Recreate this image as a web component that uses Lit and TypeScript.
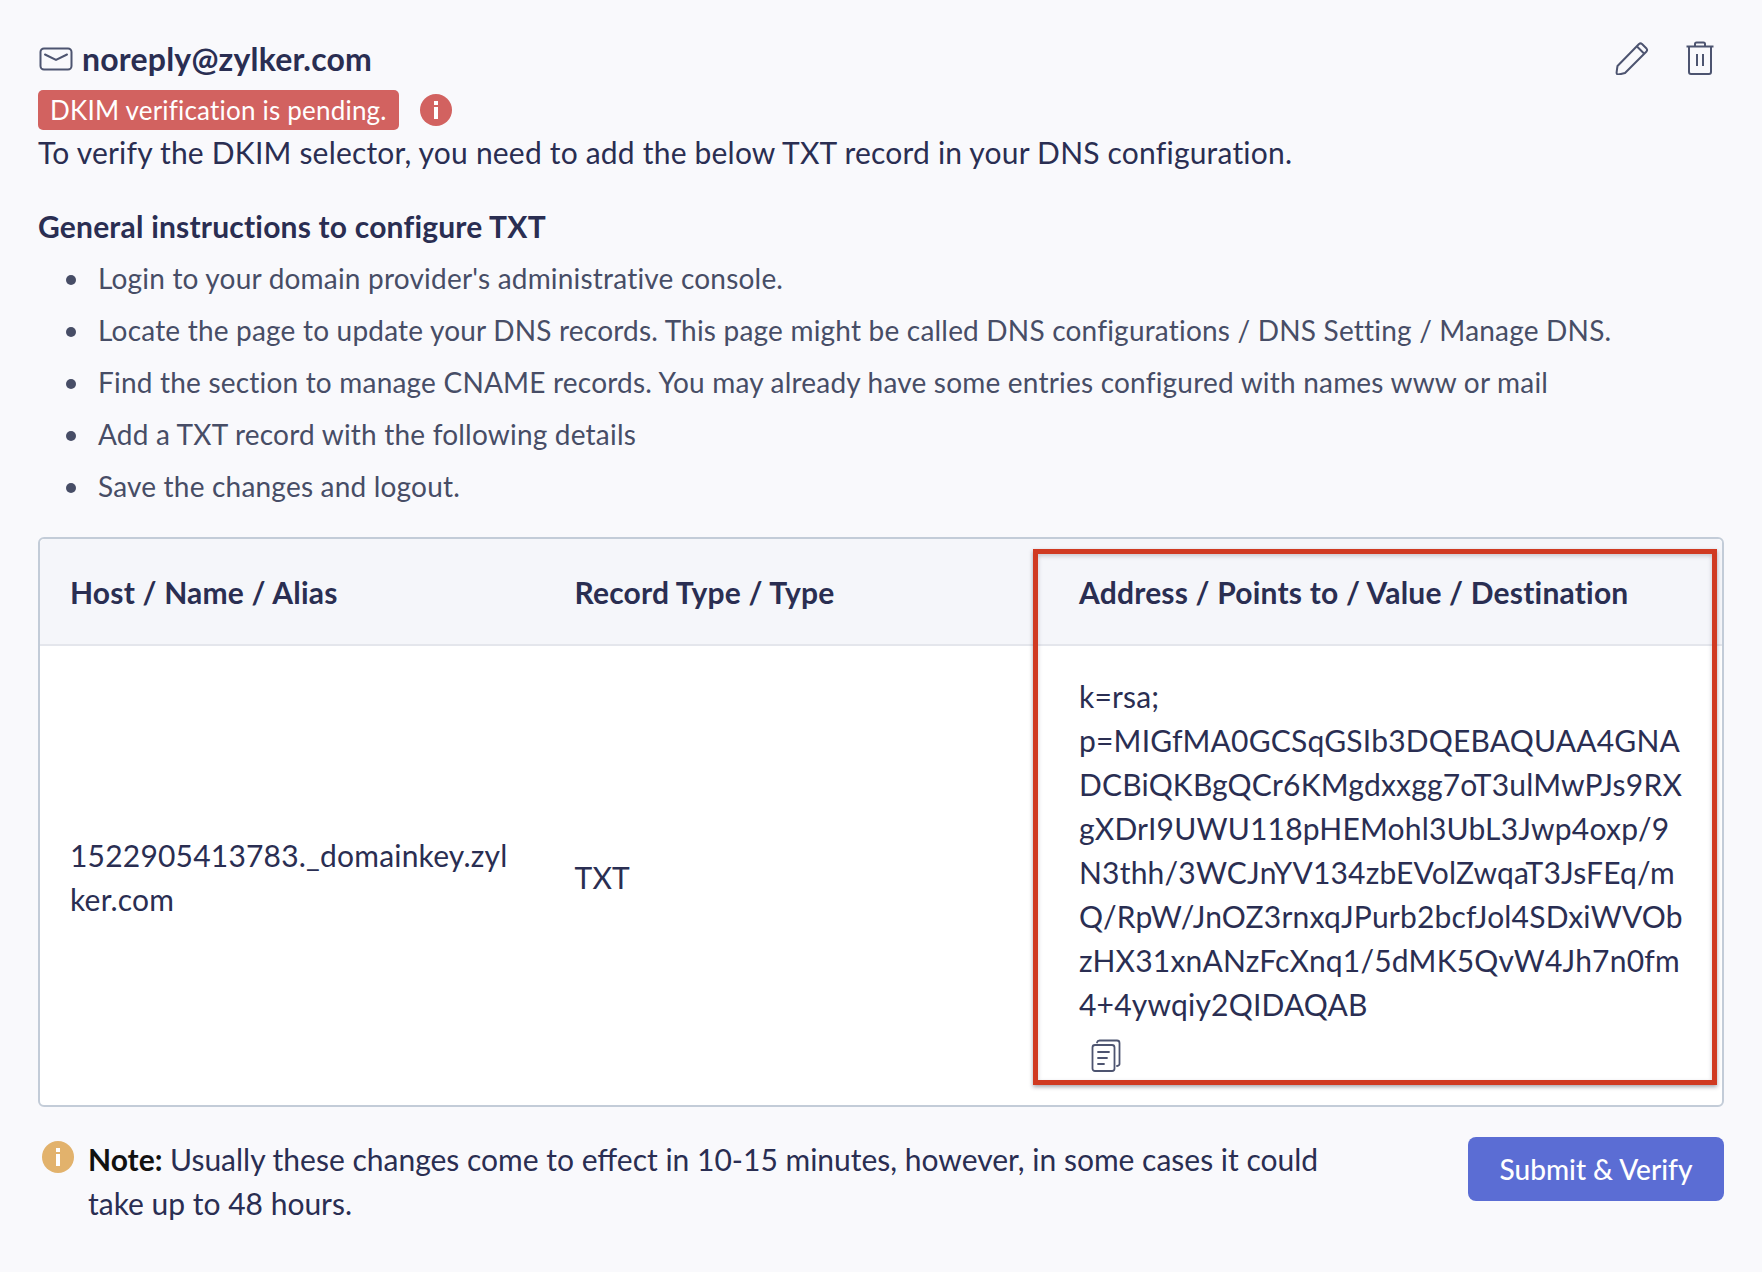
import { LitElement, html, css, svg } from "lit";
import { customElement } from "lit/decorators.js";

const items = [
  "Login to your domain provider's administrative console.",
  "Locate the page to update your DNS records. This page might be called DNS configurations / DNS Setting / Manage DNS.",
  "Find the section to manage CNAME records. You may already have some entries configured with names www or mail",
  "Add a TXT record with the following details",
  "Save the changes and logout.",
];

const stroke = "#4d5470";
const mail = svg`<svg class="mail" width="34" height="24" viewBox="0 0 34 24" fill="none" stroke="${stroke}" stroke-width="2"><rect x="1.5" y="1.5" width="31" height="21" rx="3.5"/><path d="M6 7.5 L17 13 L28 7.5" stroke-linecap="round"/></svg>`;
const pencil = svg`<svg width="34" height="34" viewBox="0 0 34 34" fill="none" stroke="${stroke}" stroke-width="2" stroke-linejoin="round"><path d="M2.5 25 L24 3 Q25.5 1.8 27 3 L31.5 7.5 Q32.7 9 31.5 10.5 L10 32 Q5 33.5 2.6 33.4 Q1.5 33 1.6 31.5 Q2 28 2.5 25Z"/><path d="M22 5.5 L29 12.5"/></svg>`;
const trash = svg`<svg width="28" height="34" viewBox="0 0 28 34" fill="none" stroke="${stroke}" stroke-width="2"><path d="M0.5 5.5 H27.5"/><path d="M9 5 V3 Q9 1.5 10.5 1.5 H17.5 Q19 1.5 19 3 V5"/><path d="M3 6 V31 Q3 33 5 33 H23 Q25 33 25 31 V6"/><path d="M11 13 V25 M17 13 V25"/></svg>`;
const copy = svg`<svg width="30" height="34" viewBox="0 0 30 34" fill="none" stroke="${stroke}" stroke-width="1.8" stroke-linecap="round"><rect x="1.5" y="6" width="22" height="26" rx="2.5"/><path d="M6 3.5 Q6.5 1.5 8.5 1.5 H26 Q28.5 1.5 28.5 4 V25 Q28.5 26.5 26 27"/><path d="M7 13 H18 M7 19 H16 M7 25 H13"/></svg>`;
const info = (c: string) => svg`<svg width="32" height="32" viewBox="0 0 32 32"><circle cx="16" cy="16" r="16" fill="${c}"/><rect x="14" y="7" width="4" height="4" fill="#fff"/><rect x="14" y="13" width="4" height="12" fill="#fff"/></svg>`;

@customElement("app-root")
export class AppRoot extends LitElement {
  static styles = css`
    :host {
      display: block;
      width: 1762px;
      height: 1272px;
      box-sizing: border-box;
      padding: 36px 38px 0;
      background: #f9f9fc;
      font-family: Lato, sans-serif;
      font-size: 30px;
      line-height: 44px;
      letter-spacing: 0.2px;
      color: #2a2e52;
    }
    .head { display: flex; align-items: center; justify-content: space-between; height: 46px; }
    .title { display: flex; align-items: center; gap: 9px; font-size: 32px; font-weight: 700; }
    .mail { display: block; margin: 0 0 0 1px; }
    .tools { display: flex; align-items: center; gap: 37px; padding-right: 10px; margin-top: -2px; }
    .tools svg { display: block; }
    .status { display: flex; align-items: center; gap: 21px; height: 40px; margin-top: 8px; }
    .badge { background: #d26260; color: #fff; border-radius: 5px; height: 40px; line-height: 40px; padding: 0 12px; font-size: 26px; }
    .status svg { display: block; }
    .intro { height: 44px; line-height: 44px; }
    h3 { margin: 30px 0 0; font-size: 30px; font-weight: 700; line-height: 44px; letter-spacing: 0.2px; }
    ul { margin: 4px 0 0; padding: 0 0 0 60px; list-style: none; color: #474d66; font-size: 28px; }
    li { height: 52px; line-height: 52px; position: relative; }
    li::before {
      content: ""; position: absolute; left: -32px; top: 23px;
      width: 10px; height: 10px; border-radius: 50%; background: #474d66;
    }
    .table {
      position: relative; margin-top: 25px; height: 570px; box-sizing: border-box;
      border: 2px solid #c3ccd8; border-radius: 6px; background: #fff;
    }
    .row { display: grid; grid-template-columns: 504.5px 504.5px 1fr; }
    .row.hd { height: 105px; align-items: center; background: #f5f6fa; border-bottom: 2px solid #e4e6ec; border-radius: 5px 5px 0 0; font-weight: 700; }
    .row.bd { height: 461px; align-items: center; }
    .cell { padding: 0 30px; }
    .wrap { word-break: break-all; }
    .value { padding-bottom: 6px; }
    .copy { display: block; margin: 13px 0 0 12px; height: 34px; line-height: 0; }
    .mark {
      position: absolute; left: 993px; top: 10px; width: 684px; height: 536px; box-sizing: border-box;
      border: 5px solid #d03a22; box-shadow: 0 2px 4px rgba(60, 60, 80, 0.45), inset 0 2px 4px rgba(60, 60, 80, 0.25);
      pointer-events: none;
    }
    .foot { display: flex; justify-content: space-between; align-items: flex-start; margin-top: 30px; }
    .note { display: flex; width: 1300px; letter-spacing: 0; }
    .note svg { flex: none; margin: 4px 14px 0 4px; }
    .note b { color: #111; }
    .btn {
      width: 256px; height: 64px; border: 0; border-radius: 8px; background: #5b6dd4; color: #fff;
      font: 500 28px/64px Lato, sans-serif; padding: 0;
    }
  `;

  render() {
    return html`
      <div class="head">
        <div class="title">${mail}<span>noreply@zylker.com</span></div>
        <div class="tools">${pencil}${trash}</div>
      </div>
      <div class="status"><span class="badge">DKIM verification is pending.</span>${info("#d26260")}</div>
      <div class="intro">To verify the DKIM selector, you need to add the below TXT record in your DNS configuration.</div>
      <h3>General instructions to configure TXT</h3>
      <ul>${items.map((i) => html`<li>${i}</li>`)}</ul>
      <div class="table">
        <div class="row hd">
          <div class="cell">Host / Name / Alias</div>
          <div class="cell">Record Type / Type</div>
          <div class="cell">Address / Points to / Value / Destination</div>
        </div>
        <div class="row bd">
          <div class="cell wrap">1522905413783._domainkey.zylker.com</div>
          <div class="cell">TXT</div>
          <div class="cell wrap value">k=rsa;<br />p=MIGfMA0GCSqGSIb3DQEBAQUAA4GNADCBiQKBgQCr6KMgdxxgg7oT3ulMwPJs9RXgXDrI9UWU118pHEMohl3UbL3Jwp4oxp/9N3thh/3WCJnYV134zbEVolZwqaT3JsFEq/mQ/RpW/JnOZ3rnxqJPurb2bcfJol4SDxiWVObzHX31xnANzFcXnq1/5dMK5QvW4Jh7n0fm4+4ywqiy2QIDAQAB<span class="copy">${copy}</span></div>
        </div>
        <div class="mark"></div>
      </div>
      <div class="foot">
        <div class="note">${info("#e2b26c")}<div><b>Note:</b> Usually these changes come to effect in 10-15 minutes, however, in some cases it could take up to 48 hours.</div></div>
        <button class="btn">Submit &amp; Verify</button>
      </div>
    `;
  }
}
